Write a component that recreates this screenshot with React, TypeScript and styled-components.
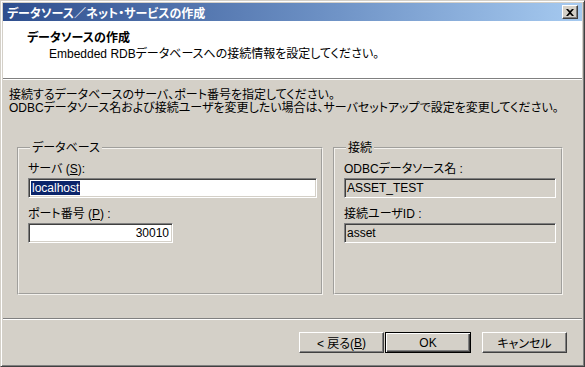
import React from "react";
import styled, { createGlobalStyle } from "styled-components";

const GlobalStyle = createGlobalStyle`
	html, body {
		margin: 0;
		padding: 0;
		background: #d4d0c8;
	}
	body {
		font-family: "Liberation Sans", "Noto Sans CJK JP", sans-serif;
		font-size: 12px;
		color: #000;
		font-feature-settings: "palt";
	}
`;

const Window = styled.div`
	width: 585px;
	height: 367px;
	box-sizing: border-box;
	display: flex;
	flex-direction: column;
	background: #d4d0c8;
	border: 1px solid;
	border-color: #d4d0c8 #404040 #404040 #d4d0c8;
	box-shadow: inset 1px 1px 0 #fff, inset -1px -1px 0 #808080;
	padding: 2px;
`;

const TitleBar = styled.div`
	height: 18px;
	flex-shrink: 0;
	display: flex;
	align-items: center;
	justify-content: space-between;
	padding: 0 4px 0 4px;
	background: linear-gradient(90deg, #2e4e8e 0%, #6c90c4 55%, #a6caf0 100%);
	color: #fff;
	font-weight: bold;
`;

const CloseButton = styled.div`
	width: 16px;
	height: 14px;
	box-sizing: border-box;
	display: flex;
	align-items: center;
	justify-content: center;
	background: #d4d0c8;
	border: 1px solid;
	border-color: #fff #404040 #404040 #fff;
	box-shadow: inset -1px -1px 0 #808080;
`;

const Header = styled.div`
	height: 57px;
	flex-shrink: 0;
	box-sizing: border-box;
	background: #fff;
	padding: 9px 0 0 24px;
	line-height: 16px;
`;

const HeaderTitle = styled.div`
	font-weight: bold;
`;

const HeaderSub = styled.div`
	padding-left: 22px;
`;

const Separator = styled.div`
	flex-shrink: 0;
	border-top: 1px solid #808080;
	border-bottom: 1px solid #fff;
`;

const Body = styled.div`
	flex: 1;
	padding: 9px 0 0 6px;
`;

const Intro = styled.p`
	margin: 0;
	line-height: 13px;
`;

const Groups = styled.div`
	display: grid;
	grid-template-columns: 306px 230px;
	gap: 10px;
	margin: 27px 0 0 8px;
`;

const Group = styled.fieldset`
	margin: 0;
	height: 153px;
	box-sizing: border-box;
	padding: 8px 0 0 9px;
	border: 2px groove #f4f2ee;
	min-width: 0;
`;

const Legend = styled.legend`
	padding: 0 2px;
	margin-left: 2px;
	line-height: 12px;
`;

const FieldLabel = styled.div`
	line-height: 14px;
	margin-bottom: 2px;
`;

const Field = styled.div`
	margin-bottom: 9px;
`;

const TextBox = styled.div<{ $width: number; $disabled?: boolean; $right?: boolean }>`
	width: ${(p) => p.$width}px;
	height: 20px;
	box-sizing: border-box;
	display: flex;
	align-items: center;
	justify-content: ${(p) => (p.$right ? "flex-end" : "flex-start")};
	padding: 0 3px 0 2px;
	background: ${(p) => (p.$disabled ? "#d4d0c8" : "#fff")};
	border: 1px solid;
	border-color: #808080 #fff #fff #808080;
	box-shadow: inset 1px 1px 0 #404040, inset -1px -1px 0 #d4d0c8;
	font-family: "Liberation Sans", sans-serif;
	font-size: 12px;
`;

const Selected = styled.span`
	background: #0a246a;
	color: #fff;
	padding: 0 1px;
`;

const Footer = styled.div`
	flex-shrink: 0;
	border-top: 1px solid #808080;
	box-shadow: inset 0 1px 0 #fff;
	height: 46px;
	display: flex;
	align-items: flex-start;
	padding: 13px 0 0 296px;
	box-sizing: border-box;
`;

const Button = styled.div<{ $default?: boolean; $gap?: number }>`
	width: ${(p) => (p.$default ? 86 : 85)}px;
	height: 21px;
	box-sizing: border-box;
	margin-left: ${(p) => p.$gap ?? 0}px;
	display: flex;
	align-items: center;
	justify-content: center;
	background: #d4d0c8;
	border: 1px solid;
	border-color: ${(p) => (p.$default ? "#000" : "#fff #404040 #404040 #fff")};
	box-shadow: ${(p) =>
		p.$default
			? "inset 1px 1px 0 #fff, inset -1px -1px 0 #404040, inset -2px -2px 0 #808080"
			: "inset -1px -1px 0 #808080"};
`;

export default function App() {
	return (
		<>
			<GlobalStyle />
			<Window>
				<TitleBar>
					<span>データソース／ネット・サービスの作成</span>
					<CloseButton>
						<svg width="8" height="7" viewBox="0 0 8 7">
							<path d="M0 0h2l2 2 2-2h2L5 3.5 8 7H6L4 5 2 7H0l3-3.5z" fill="#000" />
						</svg>
					</CloseButton>
				</TitleBar>
				<Header>
					<HeaderTitle>データソースの作成</HeaderTitle>
					<HeaderSub>Embedded RDBデータベースへの接続情報を設定してください。</HeaderSub>
				</Header>
				<Separator />
				<Body>
					<Intro>
						接続するデータベースのサーバ、ポート番号を指定してください。
						<br />
						ODBCデータソース名および接続ユーザを変更したい場合は、サーバセットアップで設定を変更してください。
					</Intro>
					<Groups>
						<Group>
							<Legend>データベース</Legend>
							<Field>
								<FieldLabel>
									サーバ (<u>S</u>):
								</FieldLabel>
								<TextBox $width={289}>
									<Selected>localhost</Selected>
								</TextBox>
							</Field>
							<Field>
								<FieldLabel>
									ポート番号 (<u>P</u>) :
								</FieldLabel>
								<TextBox $width={145} $right>
									30010
								</TextBox>
							</Field>
						</Group>
						<Group>
							<Legend>接続</Legend>
							<Field>
								<FieldLabel>ODBCデータソース名 :</FieldLabel>
								<TextBox $width={212} $disabled>
									ASSET_TEST
								</TextBox>
							</Field>
							<Field>
								<FieldLabel>接続ユーザID :</FieldLabel>
								<TextBox $width={212} $disabled>
									asset
								</TextBox>
							</Field>
						</Group>
					</Groups>
				</Body>
				<Footer>
					<Button>
						&lt; 戻る(<u>B</u>)
					</Button>
					<Button $default $gap={1}>
						OK
					</Button>
					<Button $gap={11}>キャンセル</Button>
				</Footer>
			</Window>
		</>
	);
}
